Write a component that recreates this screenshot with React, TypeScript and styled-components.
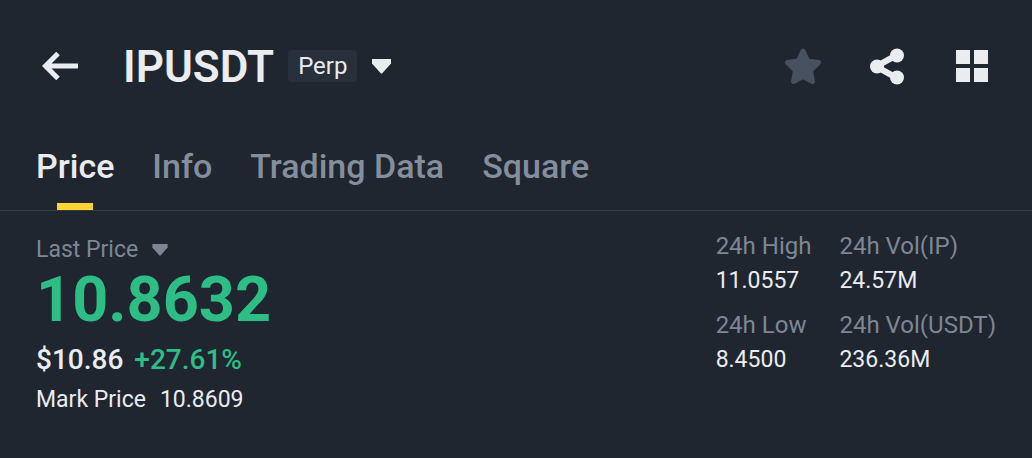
import React from "react";
import styled, { createGlobalStyle } from "styled-components";

const Global = createGlobalStyle`
  * { box-sizing: border-box; }
  html { background: #202630; }
  body { margin: 0; background: #202630; color: #eaecef; font-family: Roboto, "Liberation Sans", sans-serif; }
  button { padding: 0; border: 0; background: none; color: inherit; font: inherit; cursor: pointer; }
  svg { display: block; }
`;

const Page = styled.main`
  padding-bottom: 44px;
`;

const Header = styled.header`
  display: flex;
  align-items: center;
  justify-content: space-between;
  height: 132px;
  padding: 0 44px 0 42px;
`;

const Group = styled.div<{ $gap: number }>`
  display: flex;
  align-items: center;
  gap: ${(p) => p.$gap}px;
`;

const IconButton = styled.button`
  display: flex;
  flex: none;
`;

const Title = styled.h1`
  margin: 0 14px 0 44px;
  padding-top: 2px;
  font-size: 44px;
  line-height: 52px;
  font-weight: 600;
`;

const Badge = styled.span`
  margin-right: 15px;
  padding: 0 10px;
  border-radius: 4px;
  background: #28303b;
  font-size: 24px;
  line-height: 32px;
`;

const Tabs = styled.nav`
  display: flex;
  gap: 38px;
  height: 79px;
  padding: 0 36px;
  border-bottom: 1px solid #333b47;
`;

const Tab = styled.button<{ $active?: boolean }>`
  display: flex;
  flex-direction: column;
  align-items: center;
  justify-content: space-between;
  && {
    padding-top: 14px;
    color: ${(p) => (p.$active ? "#eaecef" : "#848e9c")};
    font-size: 34px;
    line-height: 40px;
    font-weight: 500;
  }
  &::after {
    content: "";
    width: 36px;
    height: 7px;
    background: ${(p) => (p.$active ? "#fcd535" : "transparent")};
  }
`;

const Summary = styled.section`
  display: flex;
  justify-content: space-between;
  padding: 18px 36px 0;
`;

const Prices = styled.div`
  padding-top: 2px;
`;

const LastPriceButton = styled.button`
  display: flex;
  align-items: center;
  gap: 14px;
  && {
    color: #7d8695;
    font-size: 23px;
    line-height: 37px;
  }
`;

const LastPrice = styled.div`
  color: #2ebd85;
  font-size: 63px;
  line-height: 64px;
  font-weight: 700;
`;

const Change = styled.div`
  display: flex;
  gap: 11px;
  margin-top: 7px;
  font-size: 28px;
  line-height: 42px;
  font-weight: 500;
`;

const Rise = styled.span`
  color: #2ebd85;
`;

const Mark = styled.div`
  display: flex;
  gap: 14px;
  font-size: 23px;
  line-height: 38px;
`;

const Stats = styled.dl`
  display: grid;
  grid-template-columns: auto auto;
  align-content: start;
  gap: 9px 28px;
  margin: 0;
`;

const Label = styled.dt`
  color: #7d8695;
  font-size: 24px;
  line-height: 34px;
`;

const Value = styled.dd`
  margin: 0;
  font-size: 23px;
  line-height: 36px;
`;

const Caret = ({ width, height }: { width: number; height: number }) => (
  <svg width={width} height={height} viewBox="0 0 19 15" fill="currentColor" aria-hidden="true">
    <path d="M0 0H19V4.500L10.500 14Q9.500 15 8.500 14L0 4.500Z" />
  </svg>
);

const stats = [
  ["24h High", "11.0557"],
  ["24h Vol(IP)", "24.57M"],
  ["24h Low", "8.4500"],
  ["24h Vol(USDT)", "236.36M"],
];

export default function App() {
  return (
    <>
      <Global />
      <Page>
        <Header>
          <Group $gap={0}>
            <IconButton aria-label="Back">
              <svg width="37" height="28" viewBox="0 0 37 28" fill="none" stroke="#eaecef" strokeWidth="5">
                <path d="M36 14H4M16 1.500L3.500 14L16 26.500" />
              </svg>
            </IconButton>
            <Title>IPUSDT</Title>
            <Badge>Perp</Badge>
            <IconButton aria-label="Choose contract">
              <Caret width={19} height={15} />
            </IconButton>
          </Group>
          <Group $gap={48}>
            <IconButton aria-label="Add to favorites">
              <svg width="36" height="37" viewBox="0 0 36 37" fill="#475160" stroke="#475160" strokeWidth="5" strokeLinejoin="round">
                <path d="M18 3L22.500 13L33.500 14.500L25.500 22.500L27.500 33.500L18 28.500L8.500 33.500L10.500 22.500L2.500 14.500L13.500 13Z" />
              </svg>
            </IconButton>
            <IconButton aria-label="Share">
              <svg width="35" height="37" viewBox="0 0 35 37" fill="#eaecef">
                <path d="M27 7.500L7 18.500L27 29.500" fill="none" stroke="#eaecef" strokeWidth="6" />
                <circle cx="28" cy="7.500" r="7" />
                <circle cx="8" cy="18.500" r="7" />
                <circle cx="28" cy="29.500" r="7" />
              </svg>
            </IconButton>
            <IconButton aria-label="Layout">
              <svg width="36" height="36" viewBox="0 0 36 36" fill="#eaecef">
                <path d="M4 2H18V16H4ZM22 2H36V16H22ZM4 20H18V34H4ZM22 20H36V34H22Z" />
              </svg>
            </IconButton>
          </Group>
        </Header>
        <Tabs>
          <Tab $active>Price</Tab>
          <Tab>Info</Tab>
          <Tab>Trading Data</Tab>
          <Tab>Square</Tab>
        </Tabs>
        <Summary>
          <Prices>
            <LastPriceButton>
              Last Price
              <Caret width={16} height={12} />
            </LastPriceButton>
            <LastPrice>10.8632</LastPrice>
            <Change>
              <span>$10.86</span>
              <Rise>+27.61%</Rise>
            </Change>
            <Mark>
              <span>Mark Price</span>
              <span>10.8609</span>
            </Mark>
          </Prices>
          <Stats>
            {stats.map(([label, value]) => (
              <div key={label}>
                <Label>{label}</Label>
                <Value>{value}</Value>
              </div>
            ))}
          </Stats>
        </Summary>
      </Page>
    </>
  );
}
